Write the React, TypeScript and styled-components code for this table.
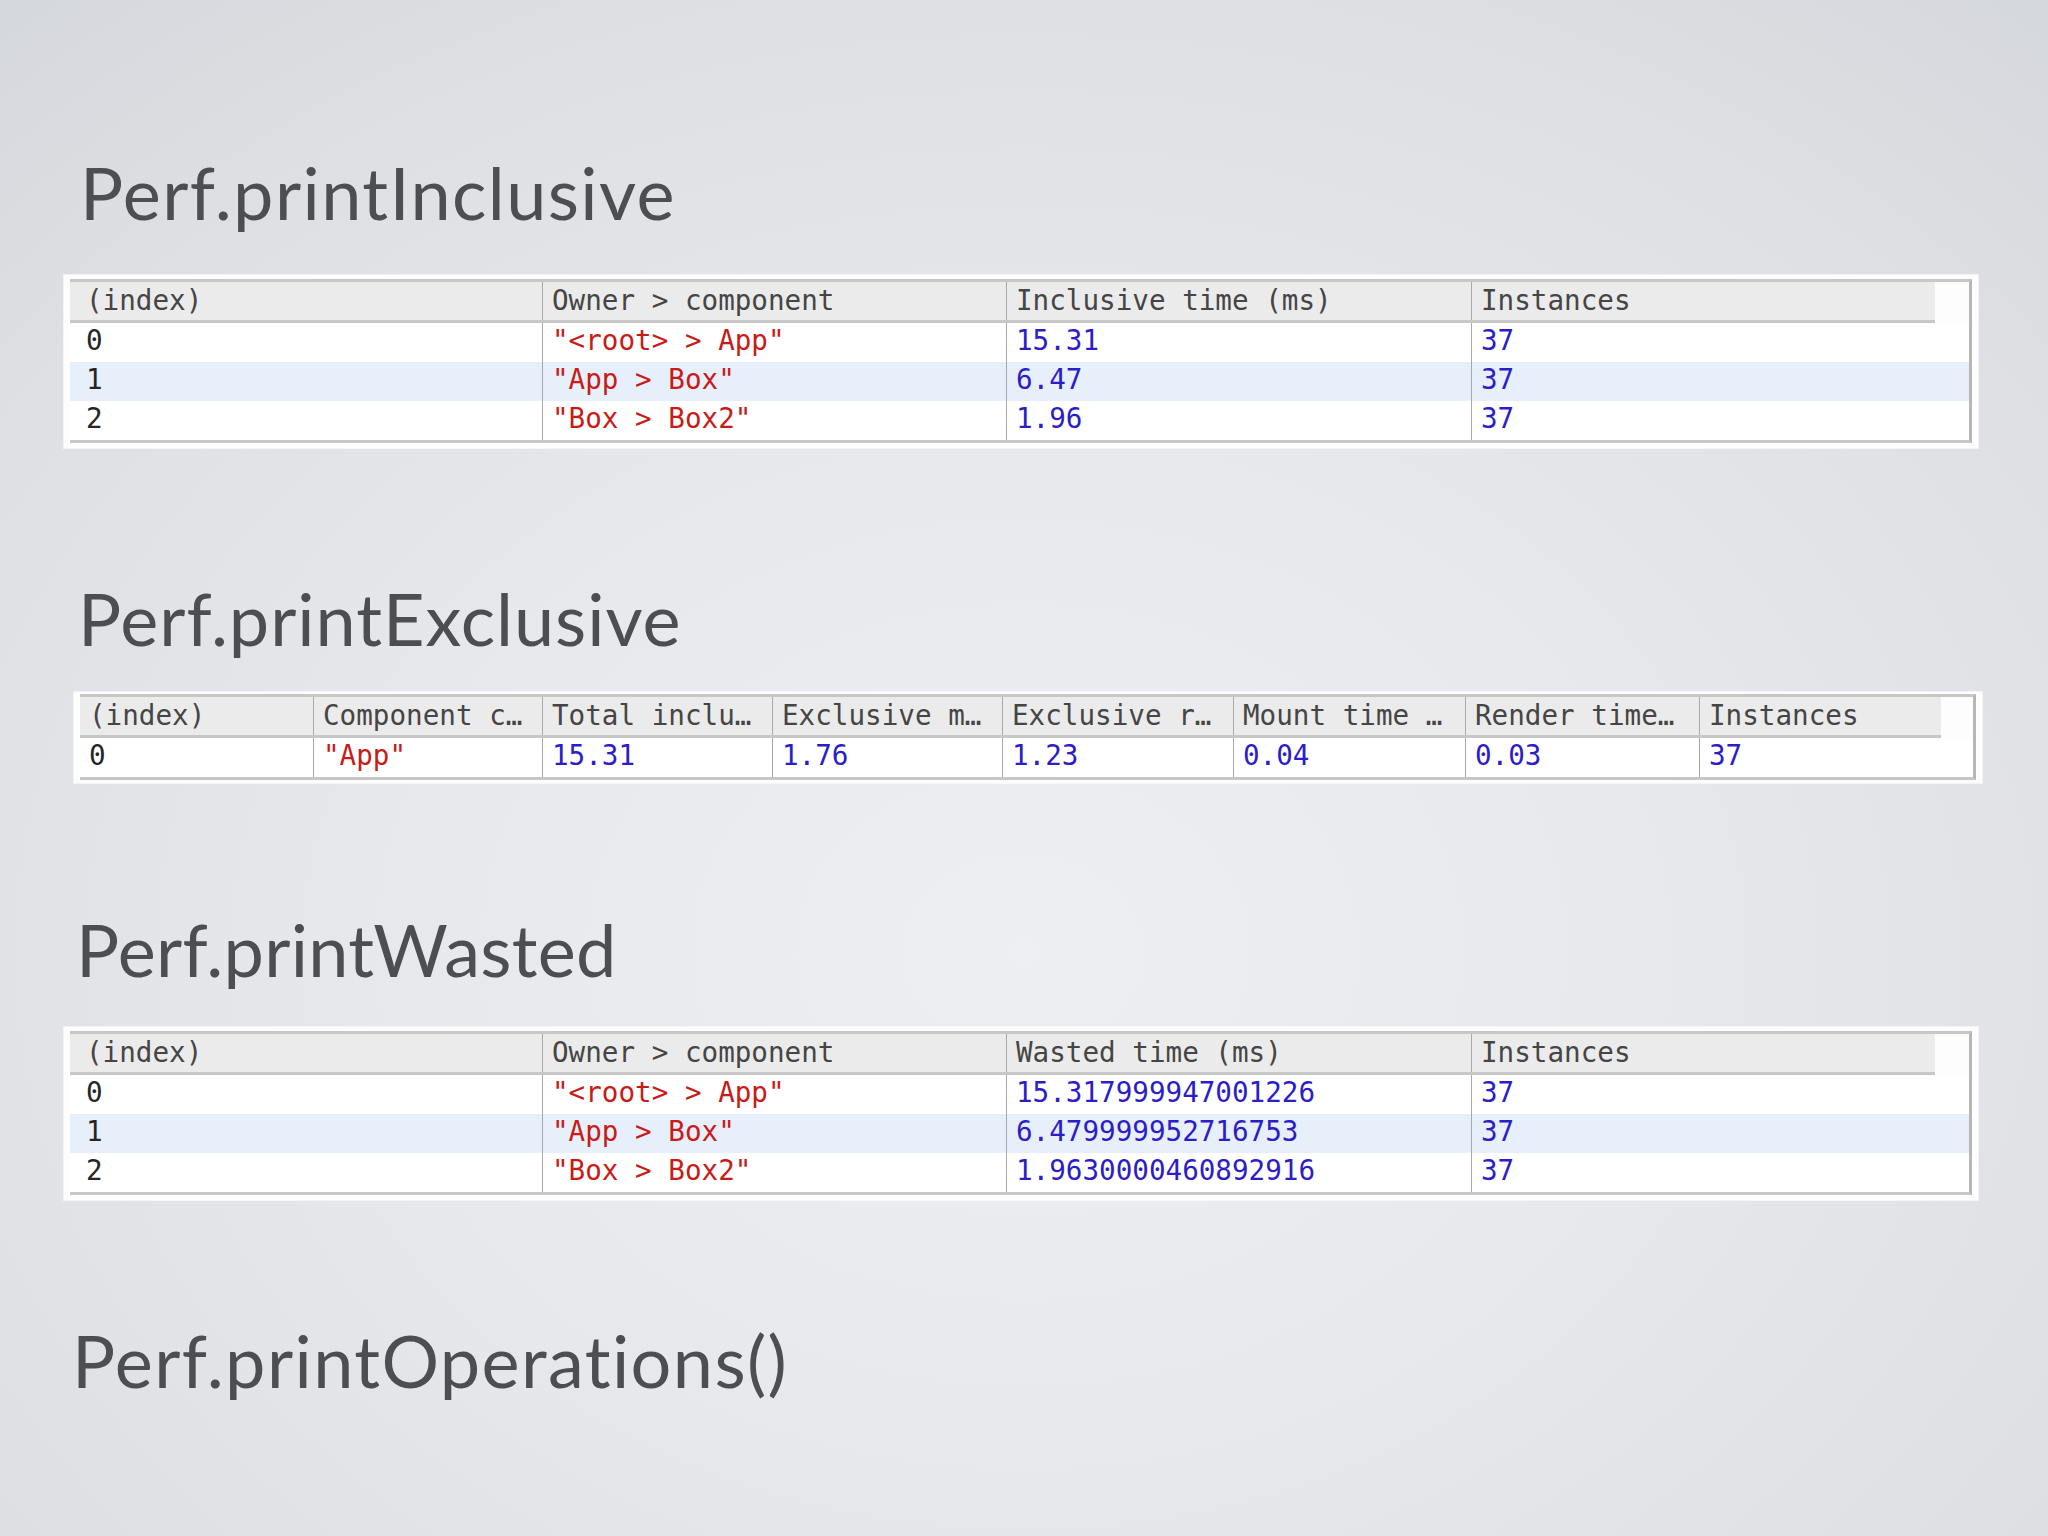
import React from "react";
import styled, { createGlobalStyle } from "styled-components";

const GlobalStyle = createGlobalStyle`
  html, body { margin: 0; padding: 0; }
  body { width: 2048px; height: 1536px; overflow: hidden; background: #e3e5e8; }
`;

const Slide = styled.main`
  width: 2048px;
  height: 1536px;
  box-sizing: border-box;
  padding-top: 156px;
  display: flex;
  flex-direction: column;
  background: radial-gradient(
    ellipse 80% 85% at 50% 62%,
    #eeeff2 0%,
    #e7e8eb 40%,
    #dddfe3 75%,
    #d3d6db 100%
  );
`;

const Title = styled.h1<{ $x: number; $gap: number; $track: number }>`
  margin: ${(p) => p.$gap}px 0 0 ${(p) => p.$x}px;
  height: 72px;
  font-family: Lato, "Open Sans", sans-serif;
  font-weight: 400;
  font-size: 72px;
  line-height: 72px;
  letter-spacing: ${(p) => p.$track}px;
  color: #4d4e52;
  white-space: nowrap;
`;

const Frame = styled.section<{ $left: number; $width: number; $gap: number; $pad: string }>`
  margin: ${(p) => p.$gap}px 0 0 ${(p) => p.$left}px;
  width: ${(p) => p.$width}px;
  box-sizing: border-box;
  padding: ${(p) => p.$pad};
  background: #fdfdfd;
  box-shadow: 0 0 0 1px rgba(255, 255, 255, 0.6);
`;

const Grid = styled.div`
  border-top: 3px solid #c7c7c7;
  border-right: 3px solid #b7b7b7;
  border-bottom: 3px solid #c7c7c7;
  font-family: "DejaVu Sans Mono", "Liberation Mono", monospace;
  font-size: 27.6px;
`;

const HeadRow = styled.div<{ $cols: string; $gutter: number }>`
  display: grid;
  grid-template-columns: ${(p) => p.$cols};
  height: 38px;
  margin-right: ${(p) => p.$gutter}px;
  background: #ebebeb;
  border-bottom: 3px solid #c7c7c7;
`;

const BodyRow = styled.div<{ $cols: string; $alt: boolean }>`
  display: grid;
  grid-template-columns: ${(p) => p.$cols};
  height: 39px;
  background: ${(p) => (p.$alt ? "#e7effb" : "#ffffff")};
`;

type Tone = "head" | "index" | "string" | "number";

const toneColor: Record<Tone, string> = {
  head: "#454545",
  index: "#262626",
  string: "#c91b17",
  number: "#2c1dc9",
};

const Cell = styled.div<{ $tone: Tone; $lead: number }>`
  box-sizing: border-box;
  padding-left: 9px;
  border-left: 1px solid #a9a9a9;
  line-height: ${(p) => (p.$tone === "head" ? 37 : 35)}px;
  color: ${(p) => toneColor[p.$tone]};
  white-space: nowrap;
  overflow: hidden;

  &:first-child {
    border-left: none;
    padding-left: ${(p) => p.$lead}px;
  }
`;

type Value = { text: string; tone: Tone };

const idx = (t: string): Value => ({ text: t, tone: "index" });
const str = (t: string): Value => ({ text: `"${t}"`, tone: "string" });
const num = (t: string): Value => ({ text: t, tone: "number" });

interface TableProps {
  cols: string;
  gutter: number;
  left: number;
  width: number;
  gap: number;
  pad: string;
  lead: number;
  headers: string[];
  rows: Value[][];
}

const ConsoleTable: React.FC<TableProps> = ({ cols, gutter, left, width, gap, pad, lead, headers, rows }) => (
  <Frame $left={left} $width={width} $gap={gap} $pad={pad}>
    <Grid>
      <HeadRow $cols={cols} $gutter={gutter}>
        {headers.map((h) => (
          <Cell key={h} $tone="head" $lead={lead}>
            {h}
          </Cell>
        ))}
      </HeadRow>
      {rows.map((row, r) => (
        <BodyRow key={r} $cols={cols} $alt={r % 2 === 1}>
          {row.map((v, c) => (
            <Cell key={c} $tone={v.tone} $lead={lead}>
              {v.text}
            </Cell>
          ))}
        </BodyRow>
      ))}
    </Grid>
  </Frame>
);

const fourCols = "472px 464px 465px 1fr";
const eightCols = "233px 229px 230px 230px 231px 232px 234px 1fr";

const inclusiveRows: Value[][] = [
  [idx("0"), str("<root> > App"), num("15.31"), num("37")],
  [idx("1"), str("App > Box"), num("6.47"), num("37")],
  [idx("2"), str("Box > Box2"), num("1.96"), num("37")],
];

const exclusiveRows: Value[][] = [
  [idx("0"), str("App"), num("15.31"), num("1.76"), num("1.23"), num("0.04"), num("0.03"), num("37")],
];

const wastedRows: Value[][] = [
  [idx("0"), str("<root> > App"), num("15.317999947001226"), num("37")],
  [idx("1"), str("App > Box"), num("6.479999952716753"), num("37")],
  [idx("2"), str("Box > Box2"), num("1.9630000460892916"), num("37")],
];

export default function App() {
  return (
    <>
      <GlobalStyle />
      <Slide>
        <Title $x={80} $gap={0} $track={1.4}>Perf.printInclusive</Title>
        <ConsoleTable
          cols={fourCols}
          gutter={34}
          left={64}
          width={1914}
          gap={47}
          pad="4px 6px 5px 6px"
          lead={16}
          headers={["(index)", "Owner > component", "Inclusive time (ms)", "Instances"]}
          rows={inclusiveRows}
        />

        <Title $x={78} $gap={134} $track={0.95}>Perf.printExclusive</Title>
        <ConsoleTable
          cols={eightCols}
          gutter={32}
          left={74}
          width={1908}
          gap={38}
          pad="2px 6px 3px 6px"
          lead={9}
          headers={[
            "(index)",
            "Component c…",
            "Total inclu…",
            "Exclusive m…",
            "Exclusive r…",
            "Mount time …",
            "Render time…",
            "Instances",
          ]}
          rows={exclusiveRows}
        />

        <Title $x={76} $gap={130} $track={0.3}>Perf.printWasted</Title>
        <ConsoleTable
          cols={fourCols}
          gutter={34}
          left={64}
          width={1914}
          gap={42}
          pad="4px 6px 5px 6px"
          lead={16}
          headers={["(index)", "Owner > component", "Wasted time (ms)", "Instances"]}
          rows={wastedRows}
        />

        <Title $x={72} $gap={124} $track={1.4}>Perf.printOperations()</Title>
      </Slide>
    </>
  );
}
